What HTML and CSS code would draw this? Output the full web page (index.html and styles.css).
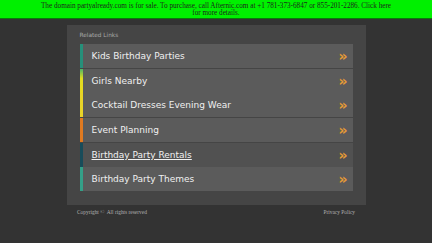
FILE: index.html
```html
<!DOCTYPE html>
<html lang="en">
<head>
  <meta charset="UTF-8">
  <title>partyalready.com</title>
  <link rel="stylesheet" href="styles.css">
</head>
<body>
  <div class="sale-bar">
    The domain partyalready.com is for sale. To purchase, call Afternic.com at +1 781-373-6847 or 855-201-2286. Click here for more details.
  </div>

  <div class="panel">
    <div class="panel-title">Related Links</div>
    <ul class="links">
      <li class="link c1"><span>Kids Birthday Parties</span><b class="arrow">»</b></li>
      <li class="link c2"><span>Girls Nearby</span><b class="arrow">»</b></li>
      <li class="link c3"><span>Cocktail Dresses Evening Wear</span><b class="arrow">»</b></li>
      <li class="link c4"><span>Event Planning</span><b class="arrow">»</b></li>
      <li class="link c5 active"><span>Birthday Party Rentals</span><b class="arrow">»</b></li>
      <li class="link c6"><span>Birthday Party Themes</span><b class="arrow">»</b></li>
    </ul>
  </div>

  <div class="footer">
    <span>Copyright &copy;&nbsp; All rights reserved</span>
    <span>Privacy Policy</span>
  </div>
</body>
</html>
```

FILE: styles.css
```css
body {
  margin: 0;
  background: #333333;
  font-family: "DejaVu Sans", sans-serif;
  height: 243px;
  overflow: hidden;
}

.sale-bar {
  background: #00f000;
  border-bottom: 1px solid #0a7a0a;
  color: #1c2a1c;
  font-family: "Liberation Serif", serif;
  font-size: 7.2px;
  line-height: 7px;
  text-align: center;
  padding: 3px 36px 1px;
  height: 14px;
}

.panel {
  width: 273px;
  margin: 6px auto 0;
  padding: 7px 13px 13px;
  background: #454545;
}

.panel-title {
  font-size: 5.8px;
  color: #a8a8a8;
  height: 12px;
}

.links {
  list-style: none;
  margin: 0;
  padding: 0;
}

.link {
  display: flex;
  align-items: center;
  justify-content: space-between;
  height: 24px;
  margin-bottom: 0.7px;
  padding: 0 5px 0 9px;
  background: #5b5b5b;
  border-left: 3px solid #2a8a72;
  color: #f0f0f0;
  font-size: 9px;
}

.link.active {
  background: #515151;
}

.link.active span {
  text-decoration: underline;
}

.c1 { border-left-color: #26907a; }
.c2 { border-left-color: #d0d820; border-image: linear-gradient(#3bb070, #e0dc20 40%, #e8d820) 1; }
.c3 { border-left-color: #e8d428; }
.c4 { border-left-color: #e07a20; }
.c5 { border-left-color: #184c5a; }
.c6 { border-left-color: #34a088; }

.arrow {
  color: #e59a35;
  font-size: 14px;
  line-height: 14px;
}

.footer {
  width: 278px;
  margin: 4px auto 0;
  display: flex;
  justify-content: space-between;
  font-family: "Liberation Serif", serif;
  font-size: 5.4px;
  color: #b0b0b0;
}
```
